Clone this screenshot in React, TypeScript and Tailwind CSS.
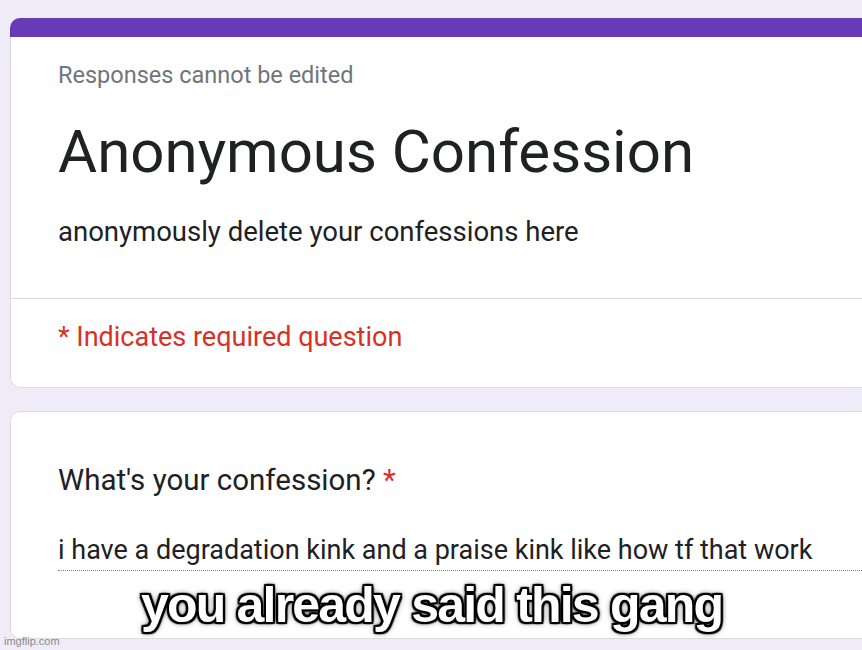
import React from 'react';

const roboto = { fontFamily: 'Roboto, "Noto Sans", Arial, sans-serif' };

export default function App() {
  return (
    <div className="relative h-[650px] w-[862px] overflow-hidden bg-[#f0ebf8]" style={roboto}>
      <div className="pl-[10px] pt-[18px]">
        {/* header card */}
        <div className="w-[900px]">
          <div className="h-[19px] rounded-tl-[10px] bg-[#673ab7]" />
          <div className="rounded-bl-[10px] border-b border-l border-[#dadce0] bg-white">
            <div className="px-[47px] pb-[50px] pt-[24px]">
              <div className="text-[23.5px] leading-[28px] text-[#70757a]">Responses cannot be edited</div>
              <h1 className="mt-[28px] text-[60px] leading-[70px] text-[#202124]">Anonymous Confession</h1>
              <div className="mt-[29px] text-[27.5px] leading-[32px] text-[#202124]">
                anonymously delete your confessions here
              </div>
            </div>
            <div className="border-t border-[#dadce0] px-[47px] pb-[34px] pt-[22px]">
              <div className="text-[27px] leading-[32px] text-[#d93025]">* Indicates required question</div>
            </div>
          </div>
        </div>

        {/* question card */}
        <div className="mt-[23px] h-[228px] w-[900px] rounded-l-[10px] border border-[#dadce0] bg-white">
          <div className="px-[47px] pt-[50px]">
            <div className="text-[29.5px] leading-[36px] text-[#202124]">
              What's your confession? <span className="text-[#d93025]">*</span>
            </div>
            <div className="mt-[36px] border-b border-dotted border-[#80868b] pb-[4px] text-[27px] leading-[32px] text-[#202124]">
              i have a degradation kink and a praise kink like how tf that work
            </div>
          </div>
        </div>
      </div>

      {/* meme caption */}
      <div
        className="absolute left-[141px] top-[577px] text-[50px] font-bold leading-[56px] tracking-[-1.8px] text-white"
        style={{
          fontFamily: '"Liberation Sans", Arial, sans-serif',
          textShadow:
            '2px 2px 1px #000, -2px -2px 1px #000, 2px -2px 1px #000, -2px 2px 1px #000, 0 2px 1px #000, 0 -2px 1px #000, 2px 0 1px #000, -2px 0 1px #000, 0 0 6px #000',
        }}
      >
        you already said this gang
      </div>

      <div
        className="absolute bottom-[3px] left-[4px] text-[11px] leading-[12px] text-[#8a8a8a]"
        style={{ fontFamily: '"Liberation Sans", Arial, sans-serif' }}
      >
        imgflip.com
      </div>
    </div>
  );
}
